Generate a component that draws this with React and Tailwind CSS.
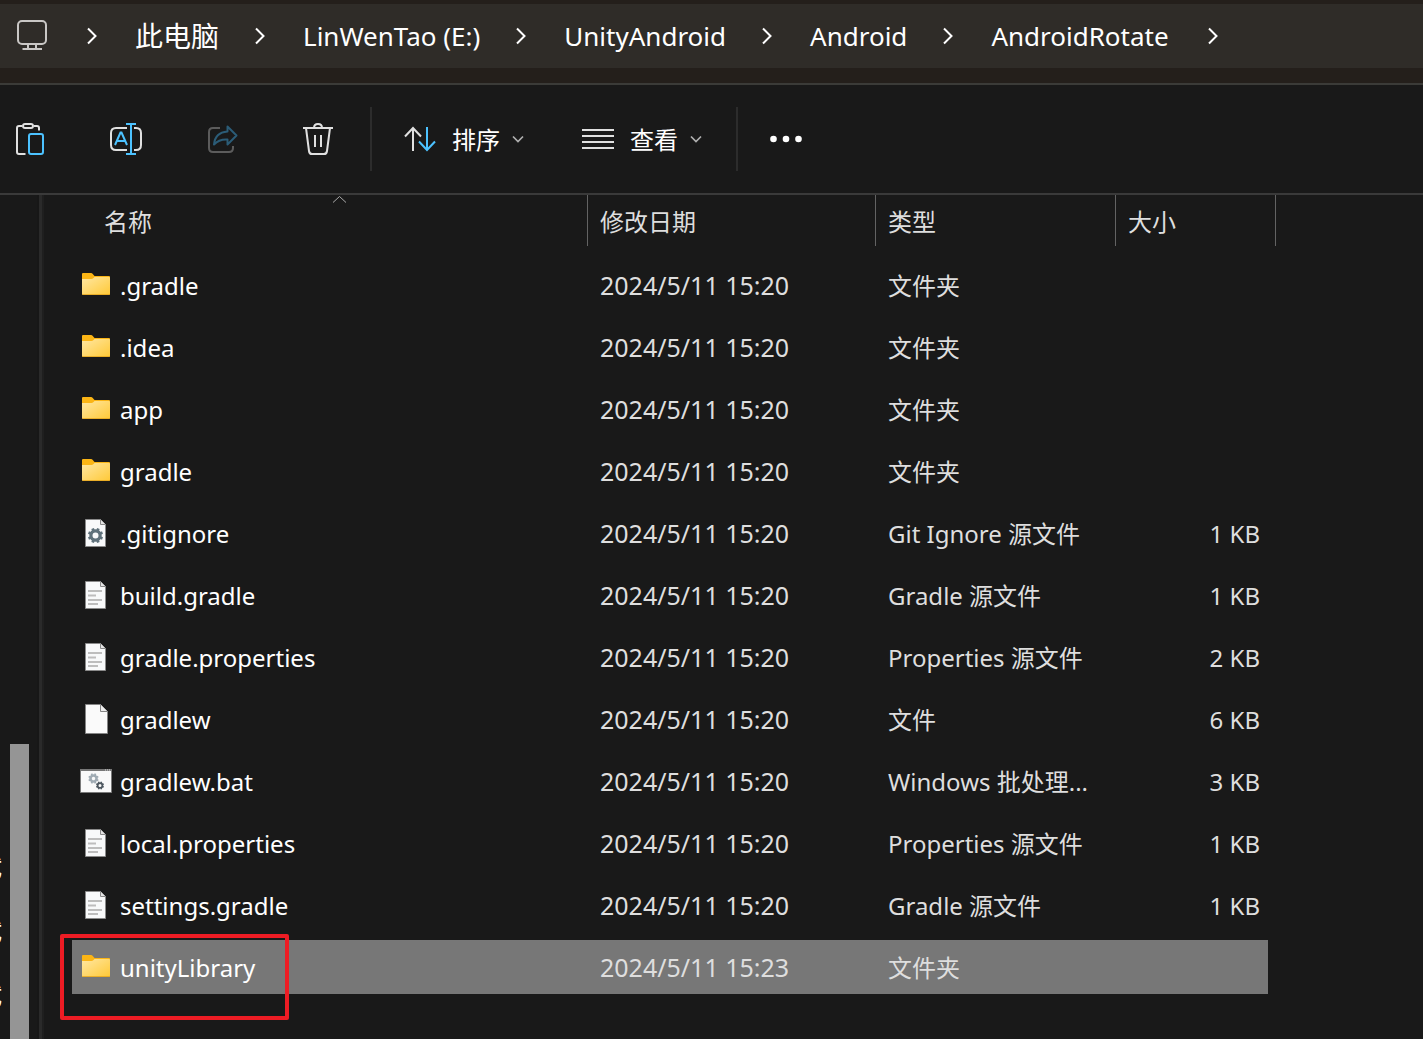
const files = [
  { icon: "folder", name: ".gradle", date: "2024/5/11 15:20", type: "文件夹", size: "" },
  { icon: "folder", name: ".idea", date: "2024/5/11 15:20", type: "文件夹", size: "" },
  { icon: "folder", name: "app", date: "2024/5/11 15:20", type: "文件夹", size: "" },
  { icon: "folder", name: "gradle", date: "2024/5/11 15:20", type: "文件夹", size: "" },
  { icon: "config", name: ".gitignore", date: "2024/5/11 15:20", type: "Git Ignore 源文件", size: "1 KB" },
  { icon: "text", name: "build.gradle", date: "2024/5/11 15:20", type: "Gradle 源文件", size: "1 KB" },
  { icon: "text", name: "gradle.properties", date: "2024/5/11 15:20", type: "Properties 源文件", size: "2 KB" },
  { icon: "blank", name: "gradlew", date: "2024/5/11 15:20", type: "文件", size: "6 KB" },
  { icon: "batch", name: "gradlew.bat", date: "2024/5/11 15:20", type: "Windows 批处理...", size: "3 KB" },
  { icon: "text", name: "local.properties", date: "2024/5/11 15:20", type: "Properties 源文件", size: "1 KB" },
  { icon: "text", name: "settings.gradle", date: "2024/5/11 15:20", type: "Gradle 源文件", size: "1 KB" },
  { icon: "folder", name: "unityLibrary", date: "2024/5/11 15:23", type: "文件夹", size: "", selected: true },
];

const crumbs = ["此电脑", "LinWenTao (E:)", "UnityAndroid", "Android", "AndroidRotate"];

function Gear({ cx, cy, r, width, color, teeth = 8 }) {
  const step = 360 / teeth;
  return (
    <g transform={`translate(${cx} ${cy})`}>
      <circle r={r} fill="none" stroke={color} strokeWidth={width} />
      {Array.from({ length: teeth }, (_, i) => (
        <rect
          key={i}
          x={-r * 0.3}
          y={-r - width * 0.5 - r * 0.3}
          width={r * 0.6}
          height={r * 0.5}
          fill={color}
          transform={`rotate(${i * step + step / 2})`}
        />
      ))}
    </g>
  );
}

function FileIcon({ kind }) {
  if (kind === "folder") {
    return (
      <svg viewBox="0 0 32 32" className="size-8 shrink-0" aria-hidden="true">
        <defs>
          <linearGradient id="folderFace" x1="0" y1="0" x2="1" y2="1">
            <stop offset="0" stopColor="#ffe7a2" />
            <stop offset="1" stopColor="#ffc937" />
          </linearGradient>
        </defs>
        <path d="M2 5Q2 4 3 4H11Q12 4 12.800 5L14.500 7H29Q30 7 30 8V15H2Z" fill="#fbb515" />
        <path d="M2 10H11.500Q12.500 10 13.300 9.300L14.500 8H29Q30 8 30 9V25Q30 26 29 26H3Q2 26 2 25Z" fill="url(#folderFace)" />
        <path d="M2 24.500Q2 26 3.500 26H28.500Q30 26 30 24.500Q30 25.200 28.500 25.200H3.500Q2 25.200 2 24.500Z" fill="#e3a21a" />
      </svg>
    );
  }
  if (kind === "batch") {
    return (
      <svg viewBox="0 0 32 32" className="size-8 shrink-0" aria-hidden="true">
        <path d="M.5 4.500H31.500V27.500H.5Z" fill="#f9f9f9" stroke="#7a7a7a" />
        <path d="M0 4H32V6H0Z" fill="#777" />
        <path d="M25 5H31" stroke="#ddd" strokeDasharray="1 1" />
        <Gear cx={13.500} cy={13.500} r={3} width={2.600} color="#a0abb3" />
        <Gear cx={20} cy={20.500} r={2.400} width={1.800} color="#4c565e" />
      </svg>
    );
  }
  if (kind === "blank") {
    return (
      <svg viewBox="0 0 32 32" className="size-8 shrink-0" aria-hidden="true">
        <path d="M5.500 1.500H20.500L27.500 8.500V30.500H5.500Z" fill="#fafafa" stroke="#858585" />
        <path d="M20.500 1.500V8.500H27.500" fill="#eee" stroke="#858585" />
      </svg>
    );
  }
  return (
    <svg viewBox="0 0 32 32" className="size-8 shrink-0" aria-hidden="true">
      <path d="M5.500 2.500H20.500L25.500 7.500V29.500H5.500Z" fill="#f8f9fa" stroke="#8a8a8a" />
      <path d="M20.500 2.500V7.500H25.500" fill="#e4e4e4" stroke="#8a8a8a" />
      {kind === "config" ? (
        <Gear cx={15.500} cy={18.500} r={4.600} width={3.200} color="#5f717b" />
      ) : (
        <path d="M8 12H22M8 16.500H16M8 21H22M8 25H18" stroke="#bdbdbd" strokeWidth="1.800" />
      )}
    </svg>
  );
}

function CrumbChevron() {
  return (
    <svg viewBox="0 0 16 20" className="h-5 w-4" fill="none" stroke="#fff" strokeWidth="2" aria-hidden="true">
      <path d="M4 2.500L11.500 10L4 17.500" />
    </svg>
  );
}

function DropChevron() {
  return (
    <svg viewBox="0 0 16 16" className="ml-2.5 size-4" fill="none" stroke="#b0b0b0" strokeWidth="1.700" aria-hidden="true">
      <path d="M3 5.500L8 10.500L13 5.500" />
    </svg>
  );
}

function ToolIcon({ children }) {
  return (
    <svg viewBox="0 0 32 32" className="size-8" fill="none" stroke="#e0e0e0" strokeWidth="2" aria-hidden="true">
      {children}
    </svg>
  );
}

function AddressBar() {
  return (
    <header className="border-b-2 border-[#3b3b38] bg-[#241f1b] pt-1 pb-[15px]">
      <nav aria-label="路径" className="flex h-16 items-center bg-[#2f2c28] pl-4 text-white">
        <button type="button" aria-label="位置" className="mr-9">
          <svg viewBox="0 0 32 32" className="size-8" fill="none" stroke="#c9c7c5" strokeWidth="2" aria-hidden="true">
            <rect x="2" y="1" width="28" height="23" rx="4" />
            <path d="M12 24V29M20 24V29M6.500 29H26" />
          </svg>
        </button>
        <CrumbChevron />
        {crumbs.map((crumb) => (
          <div key={crumb} className="group flex items-center">
            <button type="button" className="mr-[33px] ml-[35px] text-[26px] whitespace-nowrap group-last:mr-9">
              {crumb === "此电脑" ? <span className="text-[28px]">{crumb}</span> : crumb}
            </button>
            <CrumbChevron />
          </div>
        ))}
      </nav>
    </header>
  );
}

function Toolbar() {
  return (
    <div role="toolbar" aria-label="命令" className="flex h-[110px] items-center border-b-2 border-[#3a3a3a] pl-3.5 text-2xl text-white">
      <div className="flex gap-16">
        <button type="button" aria-label="粘贴">
          <ToolIcon>
            <path d="M8 3H5Q3 3 3 5V29Q3 31 5 31H11.500M20 3H23Q25 3 25 5V7.500" />
            <rect x="9" y="1" width="10" height="4" rx="2" />
            <rect x="15" y="11" width="14" height="20" rx="2" stroke="#4cc2ff" />
          </ToolIcon>
        </button>
        <button type="button" aria-label="重命名">
          <ToolIcon>
            <path d="M17 5H6Q1 5 1 10V22Q1 27 6 27H17M24 5H26Q31 5 31 10V22Q31 27 26 27H24" />
            <path d="M5 22L10.500 9.500H11.500L17 22M7 18H15M21 1V31M16 1H26M16 31H26" stroke="#4cc2ff" />
          </ToolIcon>
        </button>
        <button type="button" aria-label="共享" disabled>
          <ToolIcon>
            <path d="M14 5H7Q3 5 3 9V25Q3 29 7 29H23Q27 29 27 25V23" stroke="#5c5c5c" />
            <path d="M21.500 3.500L30.500 12.500L21.500 21.500V16.500Q13 16 8 21.500Q9 9.500 21.500 8.500Z" stroke="#2b5c77" strokeLinejoin="round" />
          </ToolIcon>
        </button>
        <button type="button" aria-label="删除">
          <ToolIcon>
            <path d="M1 5H31M12 5Q12 1 16 1T20 5M4 5L7 28Q7.400 31 10 31H22Q24.600 31 25 28L28 5M13 12V24M19 12V24" />
          </ToolIcon>
        </button>
      </div>
      <div className="mr-8 ml-9 h-16 w-0.5 bg-[#2c2c2c]" />
      <button type="button" className="flex items-center">
        <ToolIcon>
          <path d="M9 28V5M1 13.500L9 5L17 13.500" />
          <path d="M23 4V27M15 18.500L23 27L31 18.500" stroke="#4cc2ff" />
        </ToolIcon>
        <span className="ml-4 pt-0.5">排序</span>
        <DropChevron />
      </button>
      <button type="button" className="ml-14 flex items-center">
        <ToolIcon>
          <path d="M0 7H32M0 13H32M0 19H32M0 25H32" />
        </ToolIcon>
        <span className="ml-4 pt-0.5">查看</span>
        <DropChevron />
      </button>
      <div className="mx-8 h-16 w-0.5 bg-[#2c2c2c]" />
      <button type="button" aria-label="更多">
        <svg viewBox="0 0 32 32" className="size-8" fill="#fff" aria-hidden="true">
          <circle cx="3.500" cy="16" r="3.300" />
          <circle cx="16" cy="16" r="3.300" />
          <circle cx="28.500" cy="16" r="3.300" />
        </svg>
      </button>
    </div>
  );
}

function Sidebar() {
  return (
    <aside className="flex w-[44px] shrink-0 border-r-2 border-[#1f1f1f]">
      <div className="flex w-0.5 flex-col items-end justify-end gap-8 overflow-hidden pb-7 text-2xl leading-8 text-white">
        <span>试</span>
        <span>试</span>
        <span>试</span>
      </div>
      <div className="ml-2 flex w-[19px] flex-col justify-end">
        <div className="h-[295px] bg-[#959595]" />
      </div>
      <div className="ml-2 flex-1 border-r-[3px] border-[#2a2a2a] bg-[#171717]" />
    </aside>
  );
}

function Row({ file }) {
  const fill = file.selected ? "flex h-[54px] items-center bg-[#777777]" : "flex h-[54px] items-center";
  return (
    <tr className="h-[62px] text-[#dedede]" aria-selected={file.selected ? "true" : undefined}>
      <td className="relative p-0">
        <div className={fill}>
          <span className="flex items-center gap-2 pl-2 text-white">
            <FileIcon kind={file.icon} />
            <span className="pt-0.5">{file.name}</span>
          </span>
        </div>
        {file.selected && (
          <div className="absolute -top-0.5 -left-3 h-[86px] w-[229px] rounded-xs border-4 border-[#ed1c24]" />
        )}
      </td>
      <td className="p-0">
        <div className={fill}>
          <span className="pt-0.5 pl-3 text-[25px]">{file.date}</span>
        </div>
      </td>
      <td className="p-0">
        <div className={fill}>
          <span className="pt-0.5 pl-3">{file.type}</span>
        </div>
      </td>
      <td className="p-0 pr-2">
        <div className={fill}>
          <span className="ml-auto pt-0.5 pr-2">{file.size}</span>
        </div>
      </td>
    </tr>
  );
}

function FileTable() {
  const head = "h-[51px] border-r border-[#636363] p-0 pt-0.5 pl-3 text-left font-normal";
  return (
    <table className="ml-7 w-[1204px] table-fixed border-separate border-spacing-0 whitespace-nowrap text-2xl">
      <colgroup>
        <col className="w-[516px]" />
        <col className="w-[288px]" />
        <col className="w-[240px]" />
        <col className="w-[160px]" />
      </colgroup>
      <thead className="text-[#dedede]">
        <tr>
          <th scope="col" aria-sort="ascending" className="relative h-[51px] border-r border-[#636363] p-0 pt-0.5 pl-8 text-left font-normal">
            名称
            <svg viewBox="0 0 16 8" className="absolute top-0 left-[259px] h-2 w-4" fill="none" stroke="#aaa" aria-hidden="true">
              <path d="M2 7.500L8.500 1.500L15 7.500" />
            </svg>
          </th>
          <th scope="col" className={head}>修改日期</th>
          <th scope="col" className={head}>类型</th>
          <th scope="col" className={head}>大小</th>
        </tr>
      </thead>
      <tbody>
        <tr aria-hidden="true">
          <td colSpan={4} className="h-2 p-0" />
        </tr>
        {files.map((file) => (
          <Row key={file.name} file={file} />
        ))}
      </tbody>
    </table>
  );
}

export default function App() {
  return (
    <div lang="zh-CN" className='flex min-h-screen flex-col overflow-hidden bg-[#191919] font-["Noto_Sans","Noto_Sans_CJK_SC",sans-serif]'>
      <AddressBar />
      <Toolbar />
      <div className="flex flex-1">
        <Sidebar />
        <main className="min-w-0 flex-1">
          <FileTable />
        </main>
      </div>
    </div>
  );
}
